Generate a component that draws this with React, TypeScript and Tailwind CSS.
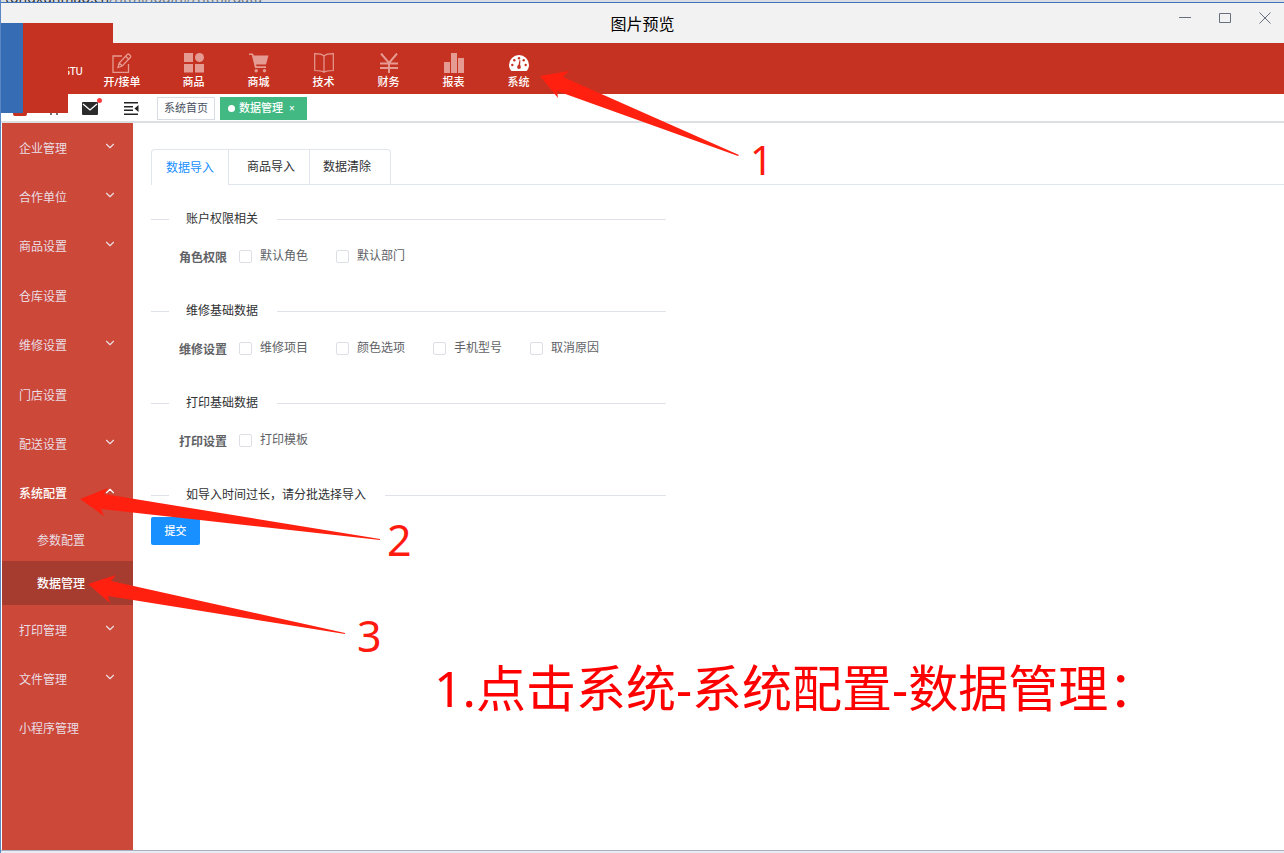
import { ReactNode } from "react";
import { ChevronDown, ChevronUp } from "lucide-react";

const navItems: { label: string; icon: ReactNode; wide?: boolean; active?: boolean }[] = [
  {
    label: "开/接单",
    wide: true,
    icon: (
      <svg viewBox="0 0 20 20" className="size-5" fill="none" stroke="currentColor" strokeWidth="1.3">
        <path d="M10 3H1v16.300h15.500V11" />
        <path d="M6 14.500l1.200-4.500L15.500 1.300c1-1 4 1.700 3 2.900L10.200 13zM13.700 3.200l3 3M7.200 10l3 3" />
      </svg>
    ),
  },
  {
    label: "商品",
    icon: (
      <svg viewBox="0 0 20 20" className="size-5" fill="currentColor">
        <path d="M0 0h9v9H0zM0 11h9v8.500H0zM11 11h9v8.500h-9z" />
        <circle cx="15.500" cy="4.500" r="4.500" />
      </svg>
    ),
  },
  {
    label: "商城",
    icon: (
      <svg viewBox="0 0 20 20" className="size-5" fill="currentColor">
        <path d="M0 .5h4l.8 2H19.500l-2.500 9H7l.6 1.800H17V15H6L2.800 2H0z" />
        <circle cx="7.200" cy="17.700" r="1.700" />
        <circle cx="15.500" cy="17.700" r="1.700" />
      </svg>
    ),
  },
  {
    label: "技术",
    icon: (
      <svg viewBox="0 0 20 20" className="size-5" fill="none" stroke="currentColor" strokeWidth="1.200">
        <path d="M10 3C8 1 6 .7.700.7V17.500C6 17.500 8 17.500 10 19.300C12 17.500 14 17.500 19.300 17.500V.7C14 .7 12 1 10 3zV19" />
      </svg>
    ),
  },
  {
    label: "财务",
    icon: (
      <svg viewBox="0 0 20 20" className="size-5" fill="none" stroke="currentColor" strokeWidth="2">
        <path d="M2 .5L10 10L18 .5M10 10V20M1 10.500h18M1 15h18" />
      </svg>
    ),
  },
  {
    label: "报表",
    icon: (
      <svg viewBox="0 0 20 20" className="size-5" fill="currentColor">
        <path d="M0 9h6v11H0zM7 0h6v20H7zM14 5h6v15h-6z" />
      </svg>
    ),
  },
  {
    label: "系统",
    active: true,
    icon: (
      <svg viewBox="0 0 20 20" className="size-5" fill="currentColor">
        <path d="M2.300 18C.8 16 0 14 0 12a10 10 0 0 1 20 0c0 2-.8 4-2.300 6z" />
        <g fill="#c53221">
          <circle cx="3.300" cy="12" r="1.200" />
          <circle cx="5.300" cy="7.300" r="1.200" />
          <circle cx="10" cy="5.200" r="1.200" />
          <circle cx="14.700" cy="7.300" r="1.200" />
          <circle cx="16.700" cy="12" r="1.200" />
          <circle cx="10" cy="14" r="1.900" />
          <path d="M9.200 13l1.300-6 .9.300-.3 6z" />
        </g>
      </svg>
    ),
  },
];

const upperMenu = [
  { label: "企业管理", group: true },
  { label: "合作单位", group: true },
  { label: "商品设置", group: true },
  { label: "仓库设置", group: false },
  { label: "维修设置", group: true },
  { label: "门店设置", group: false },
  { label: "配送设置", group: true },
  { label: "系统配置", group: true, open: true },
];

const lowerMenu = [
  { label: "打印管理", group: true },
  { label: "文件管理", group: true },
  { label: "小程序管理", group: false },
];

const sections = [
  { title: "账户权限相关", label: "角色权限", options: ["默认角色", "默认部门"] },
  { title: "维修基础数据", label: "维修设置", options: ["维修项目", "颜色选项", "手机型号", "取消原因"] },
  { title: "打印基础数据", label: "打印设置", options: ["打印模板"] },
];

function MenuItem({ label, group, open }: { label: string; group: boolean; open?: boolean }) {
  const Chevron = open ? ChevronUp : ChevronDown;
  return (
    <button
      className={`flex flex-1 items-center justify-between pt-0.5 pr-4 pl-[17px] text-xs ${open ? "font-medium text-white" : "text-[#eadde3]"}`}
    >
      <span>{label}</span>
      {group && <Chevron className="mb-1.5 size-3.5" strokeWidth={2} />}
    </button>
  );
}

function Divider({ title }: { title: string }) {
  return (
    <div className="flex h-5 items-center text-[#303133]">
      <span className="h-px w-[18px] bg-[#dfe2ea]" />
      <h2 className="pr-[19px] pl-[17px] text-xs">{title}</h2>
      <span className="h-px flex-1 bg-[#dfe2ea]" />
    </div>
  );
}

export default function App() {
  return (
    <div className="relative flex min-h-screen flex-col overflow-hidden border-l border-[#5b86c4] bg-white font-['Noto_Sans','Noto_Sans_CJK_SC',sans-serif] text-[#303133]">
      <div className="flex h-[3px] items-end overflow-hidden border-b border-[#3d74bb] bg-[#d9dde3] pl-1 text-sm leading-[9px] text-[#777]">
        <span>
          <span className="text-[#333]">tongxunmao.cn</span>/html/login#/html/data
        </span>
      </div>

      <header className="grid h-10 grid-cols-[1fr_auto_1fr] items-center bg-[#f2f2f2] text-black">
        <span />
        <h1 className="font-['Noto_Sans_CJK_SC',sans-serif] text-base">图片预览</h1>
        <div className="mb-2.5 flex items-center justify-end gap-7 pr-[13px] text-[#66707f]">
          <button aria-label="最小化">
            <svg viewBox="0 0 12 12" className="size-3" stroke="currentColor" fill="none"><path d="M0 5.500h12" /></svg>
          </button>
          <button aria-label="最大化">
            <svg viewBox="0 0 12 12" className="size-3" stroke="currentColor" fill="none"><path d="M.5 1.500h11v9H.5z" /></svg>
          </button>
          <button aria-label="关闭">
            <svg viewBox="0 0 12 12" className="size-3" stroke="currentColor" fill="none"><path d="M.5.500l11 11M11.500.500l-11 11" /></svg>
          </button>
        </div>
      </header>

      <nav className="flex h-[51px] bg-[#c53221] text-white">
        <span className="w-[82px] pt-[22px] text-right text-[10px] leading-3 font-medium">STU</span>
        {navItems.map((item) => (
          <button
            key={item.label}
            className={`flex flex-col items-center pt-2.5 ${item.wide ? "w-[78px]" : "w-[65px]"}`}
          >
            <span className={item.active ? "text-white" : "text-[#e59a92]"}>{item.icon}</span>
            <span className="text-[11px] leading-[18px] font-medium">{item.label}</span>
          </button>
        ))}
      </nav>

      <div className="relative z-10 flex h-[29px] items-center border-b-2 border-[#dcdfe4] bg-white pt-0.5 pl-3">
        <button aria-label="应用">
          <svg viewBox="0 0 14 14" className="size-3.5" fill="#c53221"><rect width="14" height="14" rx="2" /></svg>
        </button>
        <button aria-label="首页" className="ml-[21px]">
          <svg viewBox="0 0 12 12" className="size-3" fill="none" stroke="#444" strokeWidth="1.500">
            <path d="M3 12V5l3-3 3 3v7" />
          </svg>
        </button>
        <button aria-label="消息" className="relative ml-[22px]">
          <svg viewBox="0 0 16 13" className="h-[13px] w-4">
            <rect width="16" height="13" rx="1" fill="#2b2b2b" />
            <path d="M1 2l7 6 7-6" fill="none" stroke="#fff" strokeWidth="1.300" />
          </svg>
          <span className="absolute -top-1 -right-1 size-[5px] rounded-full bg-[#ff3b3b]" />
        </button>
        <button aria-label="收起菜单" className="ml-[26px]">
          <svg viewBox="0 0 15 13" className="h-[13px] w-[15px]" fill="#222">
            <path d="M0 0h14v1.500H0zM0 4h9v1.500H0zM0 7.500h9V9H0zM0 11.500h14V13H0zM14.500 3v7L10.500 6.500z" />
          </svg>
        </button>
        <a href="#home" className="ml-[18px] flex h-[23px] w-[58px] items-center justify-center border border-[#d8dce5] text-[11px] text-[#495060]">
          系统首页
        </a>
        <a href="#data" className="ml-[5px] flex h-[23px] w-[87px] items-center gap-1 bg-[#42b983] pl-2 text-[11px] font-medium text-white">
          <span className="size-[7px] rounded-full bg-white" />
          <span>数据管理</span>
          <span className="ml-0.5 text-[10px]">×</span>
        </a>
      </div>

      <div className="flex flex-1">
        <aside className="ml-px flex w-[131px] flex-col bg-[#cc4839]">
          <div className="flex h-[395px] flex-col">
            {upperMenu.map((item) => (
              <MenuItem key={item.label} {...item} />
            ))}
          </div>
          <button className="h-[43px] pt-0.5 pl-[35px] text-left text-xs text-[#eadde3]">参数配置</button>
          <button className="h-11 bg-[#a63c30] pt-0.5 pl-[35px] text-left text-xs font-medium text-white">数据管理</button>
          <div className="flex h-[148px] flex-col">
            {lowerMenu.map((item) => (
              <MenuItem key={item.label} {...item} />
            ))}
          </div>
        </aside>

        <main className="flex-1 pt-[26px] pl-[18px]">
          <div role="tablist" className="flex h-9 border-b border-[#e1e6ee] text-xs">
            <button role="tab" aria-selected="true" className="-mb-px w-[77px] rounded-tl border-t border-l border-[#e1e6ee] bg-white text-[#1890ff]">
              数据导入
            </button>
            <button role="tab" aria-selected="false" className="w-[81px] border-t border-l border-[#e1e6ee] pl-1">
              商品导入
            </button>
            <button role="tab" aria-selected="false" className="w-[82px] rounded-tr border-x border-t border-[#e1e6ee] pr-1.5">
              数据清除
            </button>
          </div>

          <form className="w-[515px] pt-6" onSubmit={(e) => e.preventDefault()}>
            {sections.map((section) => (
              <fieldset key={section.title} className="h-[92px]">
                <Divider title={section.title} />
                <div className="flex items-start pt-[17px] pl-7 text-xs leading-5 text-[#606266]">
                  <span className="mt-0.5 w-[60px] font-bold">{section.label}</span>
                  {section.options.map((option) => (
                    <label key={option} className="flex w-[97px] items-center gap-2">
                      <input
                        type="checkbox"
                        className="size-[13px] appearance-none rounded-xs border border-[#dcdfe6] bg-white checked:bg-[#1890ff]"
                      />
                      {option}
                    </label>
                  ))}
                </div>
              </fieldset>
            ))}
            <Divider title="如导入时间过长，请分批选择导入" />
            <button type="submit" className="mt-3 h-7 w-[49px] rounded-xs bg-[#1890ff] text-[11px] font-medium text-white">
              提交
            </button>
          </form>
        </main>
      </div>

      <footer className="h-[3px] border-t border-[#a9b0bf] bg-[#e9ecf3]" />

      <div className="pointer-events-none absolute top-[23px] left-0 z-20 h-[90px] w-[22px] bg-[#366cb3]" />
      <div className="pointer-events-none absolute top-[23px] left-[22px] z-20 h-5 w-[90px] bg-[#c53221]" />
      <div className="pointer-events-none absolute top-[43px] left-[22px] z-20 h-[70px] w-[45px] bg-[#c53221]" />

      <svg className="pointer-events-none absolute top-0 -left-px z-30 h-[853px] w-[1284px]" viewBox="0 0 1284 853" fill="#ff2010">
        <path d="M540 76L569 71L563 77L739 155L738 156L557 91L558 98Z" />
        <path d="M80 499L108 488L104 494L380 539L380 540L101 509L104 516Z" />
        <path d="M88 584L116 575L111 581L345 633L345 634L108 596L110 603Z" />
      </svg>
      <div className="pointer-events-none absolute inset-0 z-30 leading-none text-[#ff1a10]">
        <span className="absolute top-[140px] left-[749px] text-[40px]">1</span>
        <span className="absolute top-[518px] left-[386px] text-[43px]">2</span>
        <span className="absolute top-[614px] left-[356px] text-[43px]">3</span>
        <p className="absolute top-[663px] left-[433px] text-[50px] whitespace-nowrap text-[#ff0000]">1.点击系统-系统配置-数据管理：</p>
      </div>
    </div>
  );
}
